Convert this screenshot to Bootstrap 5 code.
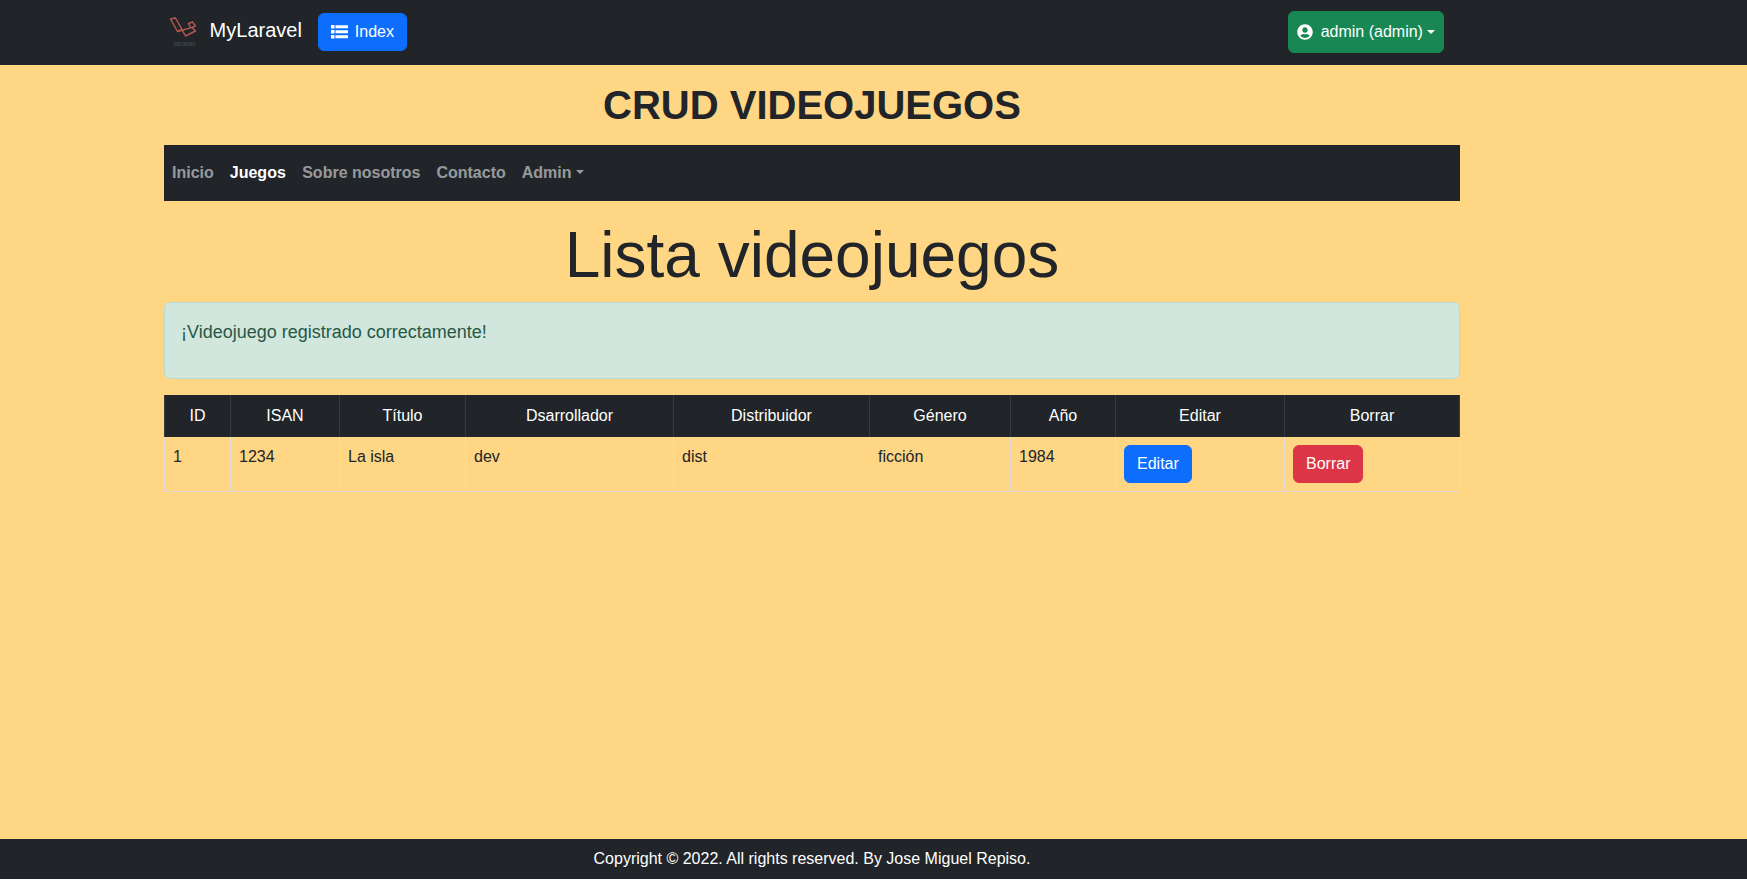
<!DOCTYPE html>
<html lang="es">
<head>
<meta charset="utf-8">
<meta name="viewport" content="width=device-width, initial-scale=1">
<title>CRUD Videojuegos</title>
<link href="https://cdn.jsdelivr.net/npm/bootstrap@5.3.0/dist/css/bootstrap.min.css" rel="stylesheet">
<style>
  body { font-family: "Liberation Sans", Arial, sans-serif; height: 888px; overflow: hidden; background: #fff; }
  .page { height: 879px; background: #ffd684; }
  .inner { width: 1624px; }
  .topbar { height: 65px; }
  .topbar-row { height: 64px; max-width: 1296px; }
  .brand-logo { width: 30px; height: 34px; margin-left: 5px; }
  .brand-text { font-size: 20px; line-height: 30px; margin: 0 16px 4px 10.6px; }
  .index-btn svg { margin-right: 7px; }
  .user-btn { height: 42px; padding: 8px; margin-right: 16px; }
  .subnav { height: 56px; }
  .subnav .nav-link { color: rgba(255,255,255,.55); padding: 8px; font-weight: 700; }
  .subnav .nav-link.active { color: #fff; padding-right: 8.4px; }
  .list-title { font-size: 64px; font-weight: 300; line-height: 77px; }
  .notice { background: #d1e7dd; border-color: #badbcc; color: #285744; font-size: 18px; height: 77px; padding: 16px; }
  .games { table-layout: fixed; --bs-table-bg: transparent; border-color: #e4dbd6; }
  .games th { font-weight: 400; text-align: center; height: 41px; padding: 7px 8px 8px; background: #212529; color: #fff; border-color: #373b3e; }
  .games thead tr { border-color: #212529; }
  .games td { height: 55px; vertical-align: top; }
  .footer-bar { height: 40px; }
</style>
</head>
<body>
<div class="page d-flex flex-column">
  <header class="bg-dark topbar">
    <div class="inner"><div class="container px-0 topbar-row d-flex align-items-center">
      <svg class="brand-logo" viewBox="0 0 30 34" fill="none">
        <path d="M1.500 4 6.500 3 13 14.500 8.500 16.500ZM8.500 16.500 21.500 12.800M13 14.800 16.500 21 26.500 16 23 12.500M19.500 8.500 23.500 7 26.500 11 21.500 12.800Z" stroke="#b9564f" stroke-width="1.400" stroke-linejoin="round"/>
        <text x="5" y="30.500" font-family="Liberation Sans" font-size="7" fill="#4b4e51" textLength="21">laravel</text>
      </svg>
      <span class="brand-text text-white">MyLaravel</span>
      <a href="#" class="btn btn-primary index-btn d-flex align-items-center">
        <svg width="17" height="16" viewBox="0 0 17 16" fill="#fff"><path d="M0 1h3.500v3.500H0zM0 6h3.500v3.500H0zM0 11h3.500v3.500H0zM4.500 1.200H17v3H4.500zM4.500 6.200H17v3H4.500zM4.500 11.200H17v3H4.500z"/></svg>Index</a>
      <a href="#" class="btn btn-success user-btn dropdown-toggle ms-auto d-flex align-items-center">
        <svg width="16" height="16" viewBox="0 0 496 512" class="me-2"><path fill="#fff" d="M248 8C111 8 0 119 0 256s111 248 248 248 248-111 248-248S385 8 248 8zm0 96c48.600 0 88 39.400 88 88s-39.400 88-88 88-88-39.400-88-88 39.400-88 88-88zm0 344c-58.700 0-111.300-26.600-146.500-68.200 18.800-35.400 55.600-59.800 98.500-59.800 2.400 0 4.800.4 7.100 1.100 13 4.200 26.600 6.900 40.900 6.900 14.300 0 28-2.700 40.900-6.900 2.300-.7 4.700-1.100 7.100-1.100 42.900 0 79.700 24.400 98.500 59.800C359.300 421.400 306.700 448 248 448z"/></svg>admin (admin)</a>
    </div></div>
  </header>
  <main class="inner flex-grow-1">
    <div class="container">
      <h1 class="text-center fw-bold mt-3 mb-3">CRUD VIDEOJUEGOS</h1>
      <nav class="subnav bg-dark d-flex align-items-center">
        <a class="nav-link" href="#">Inicio</a>
        <a class="nav-link active" href="#">Juegos</a>
        <a class="nav-link" href="#">Sobre nosotros</a>
        <a class="nav-link" href="#">Contacto</a>
        <a class="nav-link dropdown-toggle" href="#">Admin</a>
      </nav>
      <h2 class="list-title text-center mt-3 mb-2">Lista videojuegos</h2>
      <div class="alert notice mb-3"><p>¡Videojuego registrado correctamente!</p></div>
      <table class="table table-bordered games">
        <colgroup><col style="width:66px"><col style="width:109px"><col style="width:126px"><col style="width:208px"><col style="width:196px"><col style="width:141px"><col style="width:105px"><col style="width:169px"><col></colgroup>
        <thead><tr><th>ID</th><th>ISAN</th><th>Título</th><th>Dsarrollador</th><th>Distribuidor</th><th>Género</th><th>Año</th><th>Editar</th><th>Borrar</th></tr></thead>
        <tbody><tr><td>1</td><td>1234</td><td>La isla</td><td>dev</td><td>dist</td><td>ficción</td><td>1984</td><td><a href="#" class="btn btn-primary">Editar</a></td><td><button class="btn btn-danger">Borrar</button></td></tr></tbody>
      </table>
    </div>
  </main>
  <footer class="bg-dark text-white footer-bar">
    <div class="inner text-center pt-2">Copyright © 2022. All rights reserved. By Jose Miguel Repiso.</div>
  </footer>
</div>
<script src="https://cdn.jsdelivr.net/npm/bootstrap@5.3.0/dist/js/bootstrap.bundle.min.js"></script>
</body>
</html>
